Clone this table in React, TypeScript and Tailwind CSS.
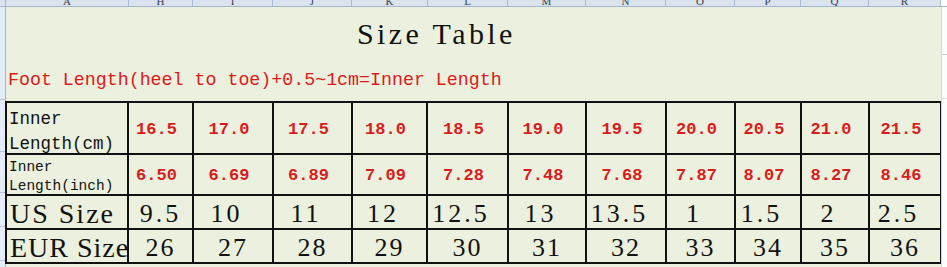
const cols = [
  { letter: 'A', w: 'w-[123px]' },
  { letter: 'H', w: 'w-[64px]' },
  { letter: 'I', w: 'w-[80px]' },
  { letter: 'J', w: 'w-[79px]' },
  { letter: 'K', w: 'w-[76px]' },
  { letter: 'L', w: 'w-[80px]' },
  { letter: 'M', w: 'w-[78px]' },
  { letter: 'N', w: 'w-[80px]' },
  { letter: 'O', w: 'w-[69px]' },
  { letter: 'P', w: 'w-[66px]' },
  { letter: 'Q', w: 'w-[68px]' },
  { letter: 'R', w: 'w-[72px]' },
];

const tableCols = ['w-[122px]', 'w-[65px]', 'w-[80px]', 'w-[79px]', 'w-[75px]', 'w-[81px]', 'w-[78px]', 'w-[80px]', 'w-[69px]', 'w-[66px]', 'w-[68px]', 'w-[72px]'];

const cm = ['16.5', '17.0', '17.5', '18.0', '18.5', '19.0', '19.5', '20.0', '20.5', '21.0', '21.5'];
const inch = ['6.50', '6.69', '6.89', '7.09', '7.28', '7.48', '7.68', '7.87', '8.07', '8.27', '8.46'];
const us = ['9.5', '10', '11', '12', '12.5', '13', '13.5', '1', '1.5', '2', '2.5'];
const eur = ['26', '27', '28', '29', '30', '31', '32', '33', '34', '35', '36'];

const mono = { fontFamily: '"Liberation Mono", monospace' };
const serif = { fontFamily: '"Liberation Serif", serif' };

export default function App() {
  return (
    <div className="w-[947px] h-[267px] overflow-hidden bg-[#ebf1de] flex flex-col">
      {/* Column headers */}
      <div className="h-[7px] flex bg-[#dbe3ee] border-b border-[#a3b6cc] overflow-hidden shrink-0">
        <div className="w-[6px] shrink-0 border-r border-[#a3b6cc]" />
        {cols.map((c) => (
          <div
            key={c.letter}
            className={`${c.w} shrink-0 border-r border-[#a8bbd2] flex justify-center text-[11px] leading-[11px] text-[#34404f] -mt-[4px]`}
            style={serif}
          >
            {c.letter}
          </div>
        ))}
        <div className="flex-1 bg-white" />
      </div>

      <div className="flex flex-1">
        {/* Row headers */}
        <div className="w-[6px] shrink-0 bg-[#e4ecf7] border-r border-[#9fb3cc] flex flex-col">
          <div className="h-[93px] border-b border-[#b6c6da]" />
          <div className="h-[52px] border-b border-[#b6c6da]" />
          <div className="h-[41px] border-b border-[#b6c6da]" />
          <div className="h-[34px] border-b border-[#b6c6da]" />
          <div className="h-[34px] border-b border-[#b6c6da]" />
        </div>

        {/* Sheet */}
        <div className="w-[935px] shrink-0 flex flex-col">
          <div className="h-[52px] flex items-center pl-[351px]">
            <span className="text-[30px] tracking-[3.4px] text-[#111]" style={serif}>
              Size Table
            </span>
          </div>
          <div className="h-[42px] flex items-center pl-[2px] pt-[2px]">
            <span className="text-[18.3px] text-[#dd1a1a] whitespace-pre" style={mono}>
              Foot Length(heel to toe)+0.5~1cm=Inner Length
            </span>
          </div>

          <table className="table-fixed border-collapse w-[935px] -ml-px">
            <colgroup>
              {tableCols.map((w, i) => (
                <col key={i} className={w} />
              ))}
            </colgroup>
            <tbody>
              <tr className="h-[52px]">
                <td className="border-2 border-[#111] px-[2px] pt-[7px] align-top text-[17.5px] text-[#111]" style={mono}>
                  <div className="leading-[18px]">Inner</div>
                  <div className="leading-[18px] mt-[7px]">Length(cm)</div>
                </td>
                {cm.map((v) => (
                  <td key={v} className="border-2 border-[#111] text-center pr-[8px] pt-[4px] text-[17px] leading-[24px] font-bold text-[#d91c1c]" style={mono}>
                    {v}
                  </td>
                ))}
              </tr>
              <tr className="h-[41px]">
                <td className="border-2 border-[#111] px-[2px] pt-[5px] align-top text-[14.5px] text-[#111]" style={mono}>
                  <div className="leading-[15px]">Inner</div>
                  <div className="leading-[15px] mt-[4px]">Length(inch)</div>
                </td>
                {inch.map((v) => (
                  <td key={v} className="border-2 border-[#111] text-center pr-[8px] pt-[2px] text-[17px] leading-[24px] font-bold text-[#d91c1c]" style={mono}>
                    {v}
                  </td>
                ))}
              </tr>
              <tr className="h-[34px]">
                <td className="border-2 border-[#111] px-[3px] pt-[5px] align-top text-[28px] leading-[26px] tracking-[2px] whitespace-nowrap text-[#111]" style={serif}>
                  US Size
                </td>
                {us.map((v, i) => (
                  <td
                    key={v}
                    className={`border-2 border-[#111] text-center pt-[5px] align-top text-[26px] leading-[26px] tracking-[3px] text-[#111] ${i === 0 ? '' : 'pr-[13px]'}`}
                    style={serif}
                  >
                    {v}
                  </td>
                ))}
              </tr>
              <tr className="h-[34px]">
                <td className="border-2 border-[#111] px-[3px] pt-[5px] align-top text-[28px] leading-[26px] tracking-[1px] whitespace-nowrap text-[#111]" style={serif}>
                  EUR Size
                </td>
                {eur.map((v) => (
                  <td key={v} className="border-2 border-[#111] text-center pt-[5px] align-top text-[26px] leading-[26px] tracking-[2px] text-[#111]" style={serif}>
                    {v}
                  </td>
                ))}
              </tr>
            </tbody>
          </table>
        </div>

        {/* Off-sheet area */}
        <div className="flex-1 bg-[#fbfcfc] border-l border-[#d4d8dc] flex flex-col">
          <div className="h-[48px] border-b border-[#c9cdd2]" />
          <div className="h-[44px] border-b border-[#dfe2e5]" />
        </div>
      </div>
    </div>
  );
}
